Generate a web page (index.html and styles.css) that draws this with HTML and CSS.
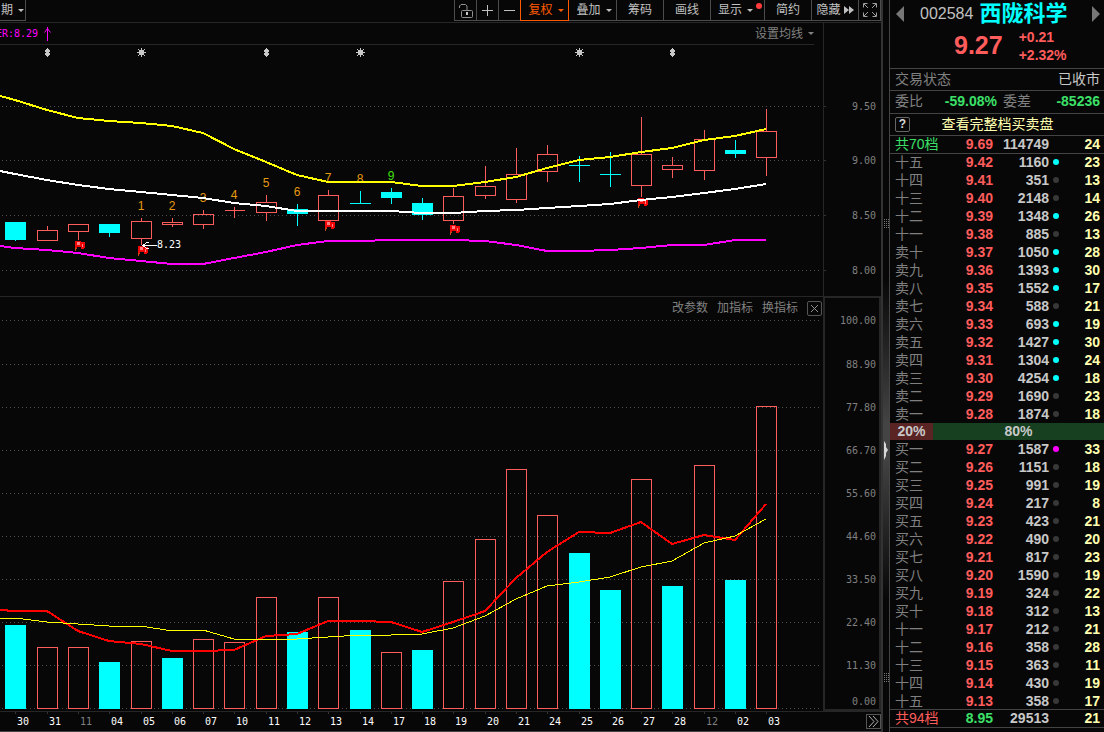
FILE: index.html
```html
<!DOCTYPE html>
<html lang="zh-CN">
<head>
  <meta charset="UTF-8">
  <title>西陇科学 002584</title>
  <meta name="viewport" content="width=device-width, initial-scale=1.0">
  <link rel="stylesheet" href="styles.css">
</head>
<body>
<div class="terminal">

  <!-- Charts -->
  <main class="charts">
    <div class="toolbar">
      <button class="tool period">期<i class="caret"></i></button>
      <div class="tools">
        <button class="tool icon" aria-label="锁定">
          <svg width="16" height="16" viewBox="0 0 16 16">
            <path d="M1.500 6V4L3 2.500h4.500L9 4v4" fill="none" stroke="#909090"/>
            <rect x="3.500" y="8.500" width="11" height="7" rx="1" fill="none" stroke="#909090"/>
            <path d="M9 10v3" stroke="#c8c8c8" stroke-width="2"/>
          </svg>
        </button>
        <button class="tool icon" aria-label="放大">
          <svg width="12" height="12" viewBox="0 0 12 12"><path d="M0 6.500h11M5.500 1v11" stroke="#c0c0c0"/></svg>
        </button>
        <button class="tool icon" aria-label="缩小">
          <svg width="12" height="12" viewBox="0 0 12 12"><path d="M0 6.500h11" stroke="#c0c0c0"/></svg>
        </button>
        <button class="tool wide on">复权<i class="caret"></i></button>
        <button class="tool wide">叠加<i class="caret"></i></button>
        <button class="tool">筹码</button>
        <button class="tool">画线</button>
        <button class="tool wider">显示<i class="caret"></i><i class="badge"></i></button>
        <button class="tool">简约</button>
        <button class="tool hide">隐藏<svg width="10" height="8" viewBox="0 0 10 8"><path d="M0 0l5 4-5 4zM5 0l5 4-5 4z" fill="#c0c0c0"/></svg></button>
        <button class="tool icon" aria-label="全屏">
          <svg width="14" height="14" viewBox="0 0 14 14"><path d="M.5 4.500v-4h4M9.500.5h4v4M13.500 9.500v4h-4M4.500 13.500h-4v-4M1 1l4 4M13 1L9 5M13 13L9 9M1 13l4-4" fill="none" stroke="#a0a0a0"/></svg>
        </button>
      </div>
    </div>

    <section class="pane">
      <div class="plot">
        <div class="ma-bar">
          <span class="er">ER:8.29</span>
          <svg width="8" height="14" viewBox="0 0 8 14"><path d="M3.500 0v14M.5 5.500l3-4 3 4" fill="none" stroke="#f0f"/></svg>
          <button class="plain ma-set">设置均线<i class="caret"></i></button>
        </div>
        <svg class="k-chart" id="kChart"></svg>
      </div>
      <svg class="axis" id="kAxis"></svg>
    </section>

    <section class="pane lower">
      <div class="plot">
        <div class="ind-bar">
          <button class="plain">改参数</button>
          <button class="plain">加指标</button>
          <button class="plain">换指标</button>
          <button class="close" aria-label="关闭">
            <svg width="9" height="9" viewBox="0 0 9 9"><path d="M1 1l7 7M8 1L1 8" stroke="#909090"/></svg>
          </button>
        </div>
        <svg class="v-chart" id="vChart"></svg>
      </div>
      <svg class="axis" id="vAxis"></svg>
    </section>

    <div class="date-bar">
      <svg class="dates" id="dates"></svg>
      <button class="more" aria-label="更多">
        <svg width="11" height="11" viewBox="0 0 11 11"><path d="M1 0l5 5.500L1 11M5 0l5 5.500L5 11" fill="none" stroke="#b0b0b0"/></svg>
      </button>
    </div>
  </main>

  <!-- Splitter -->
  <svg class="splitter">
    <path d="M1 441l2 3v3l2 3-2 3v3l-2 4z" fill="#d8d8d8"/>
    <path d="M1.500 219v9M3.500 219v9M5.500 219v9M1.500 673v9M3.500 673v9M5.500 673v9" stroke="#777" stroke-dasharray="1 1"/>
  </svg>

  <!-- Quote panel -->
  <aside class="quote">
    <div class="stock">
      <button class="plain" aria-label="上一只"><svg width="8" height="16" viewBox="0 0 8 16"><path d="M8 0v16L0 8z" fill="#777"/></svg></button>
      <span class="code">002584</span>
      <h1>西陇科学</h1>
      <button class="plain next" aria-label="下一只"><svg width="8" height="16" viewBox="0 0 8 16"><path d="M0 0v16l8-8z" fill="#777"/></svg></button>
    </div>
    <div class="price">
      <strong>9.27</strong>
      <div class="change">+0.21<br>+2.32%</div>
    </div>
    <div class="line status"><span>交易状态</span><span class="closed">已收市</span></div>
    <div class="line ratio">
      <span>委比</span><b>-59.08%</b><span>委差</span><b>-85236</b>
    </div>
    <div class="line full">
      <button class="help" aria-label="帮助">?</button>
      <button class="plain view">查看完整档买卖盘</button>
    </div>
    <table class="book" id="asks"></table>
    <div class="balance"><span class="buy">20%</span><span class="sell">80%</span></div>
    <table class="book bids" id="bids"></table>
  </aside>

</div>
<script src="script.js"></script>
</body>
</html>
```

FILE: styles.css
```css
* { box-sizing: border-box; }

body {
  margin: 0;
  background: #070707;
  color: #808080;
  font: 12px/18px "Liberation Sans", "Noto Sans CJK SC", sans-serif;
}

button {
  font: inherit;
  color: inherit;
  background: none;
  border: none;
  padding: 0;
  cursor: pointer;
}

svg { display: block; flex: none; }

.terminal { display: flex; min-height: 100vh; overflow: hidden; }

/* Charts */
.charts {
  flex: 1;
  min-width: 0;
  border-right: 2px solid #333;
}

/* Toolbar */
.toolbar {
  display: flex;
  justify-content: space-between;
  align-items: flex-start;
  height: 23px;
  border-bottom: 1px solid #262626;
}
.tools { display: flex; }
.tool {
  position: relative;
  display: flex;
  align-items: center;
  justify-content: center;
  width: 48px;
  height: 21px;
  margin-left: -1px;
  border: 1px solid #4c4c4c;
  border-top: none;
  color: #c0c0c0;
}
.tool.icon { width: 23px; }
.tool.wide { width: 49px; padding-left: 3px; }
.tool.wider { width: 55px; padding-right: 4px; }
.tool.hide { gap: 3px; }
.tool.on { color: #ff5a00; border-color: #ff5a00; z-index: 1; }
.tool.period {
  width: 26px;
  margin-left: 0;
  border-left: none;
}
.caret {
  margin-left: 5px;
  border: 3px solid transparent;
  border-top-color: currentColor;
  border-bottom: none;
}
.badge {
  position: absolute;
  top: 3px;
  right: 2px;
  width: 6px;
  height: 6px;
  border-radius: 3px;
  background: #ff3b3b;
}

/* Panes */
.pane { display: flex; border-bottom: 1px solid #262626; }
.plot { flex: 1; min-width: 0; }
.axis { width: 58px; border-left: 1px solid #262626; }
.lower .axis { border: 2px solid #262626; border-top-width: 1px; }
.ma-bar {
  display: flex;
  align-items: center;
  height: 22px;
  margin-right: 9px;
  border-bottom: 1px solid #262626;
}
.er {
  width: 44px;
  text-indent: -4px;
  font: 10px/18px "DejaVu Sans Mono", monospace;
  color: #f0f;
}
.plain { display: flex; align-items: center; }
.ma-set { margin-left: auto; }
.k-chart { width: 100%; height: 251px; }
.ind-bar {
  display: flex;
  justify-content: flex-end;
  align-items: center;
  gap: 9px;
  height: 22px;
  padding-right: 1px;
}
.close {
  display: flex;
  align-items: center;
  justify-content: center;
  width: 15px;
  height: 15px;
  border: 1px solid #555;
  border-radius: 2px;
}
.v-chart { width: 100%; height: 392px; }

/* Chart marks */
.k-chart, .v-chart, .axis, .dates { shape-rendering: crispEdges; }
.grid { stroke: #505050; stroke-dasharray: 1 3; stroke-dashoffset: -2; }
.tick { stroke: #333; }
.up { fill: none; stroke: #ff5c5c; }
.down { fill: #0ff; }
.down-wick { stroke: #0ff; }
.curve { fill: none; stroke-width: 2; }
.curve.thin { stroke-width: 1; }
.count { font-size: 12px; fill: #e69a10; text-anchor: middle; }
.count.last { fill: #3fe010; }
.num { font: 10px "DejaVu Sans Mono", monospace; fill: #808080; }
.axis .num { text-anchor: end; }
.num.white { fill: #fff; }
.dates .num { text-anchor: middle; }

/* Dates */
.date-bar {
  display: flex;
  align-items: center;
  height: 20px;
  border-bottom: 1px solid #444;
}
.dates { flex: 1; min-width: 0; height: 19px; }
.more {
  display: flex;
  align-items: center;
  justify-content: center;
  width: 15px;
  height: 15px;
  border: 1px solid #555;
}

/* Splitter */
.splitter {
  width: 6px;
  background: linear-gradient(#070707 38%, #444 58%, #444 62%, #070707 82%);
}

/* Quote panel */
.quote {
  width: 215px;
  border-left: 1px solid #444;
  font-size: 14px;
}
.stock {
  display: flex;
  align-items: center;
  height: 28px;
  padding: 0 4px 0 6px;
}
.code { margin: 0 6px 0 16px; font-size: 16px; color: #c0c0c0; }
h1 { margin: 0; font-size: 22px; font-weight: bold; line-height: 28px; color: #0ff; }
.next { margin-left: auto; }
.price {
  display: flex;
  gap: 16px;
  height: 40px;
  padding-left: 64px;
  color: #ff5c5c;
}
.price strong { font-size: 25px; font-weight: bold; line-height: 34px; }
.change { font-weight: bold; line-height: 18px; }
.line {
  height: 22px;
  padding: 0 4px 0 5px;
  border-top: 1px solid #444;
  line-height: 21px;
}
.status { display: flex; justify-content: space-between; }
.closed { color: #c8c8c8; }
.ratio {
  display: grid;
  grid-template-columns: 28px 74px 34px 1fr;
  height: 23px;
}
.ratio b { text-align: right; color: #3ce068; }
.ratio span:nth-child(3) { text-align: right; }
.full {
  display: grid;
  grid-template-columns: 1fr auto 1fr;
  align-items: center;
  height: 23px;
  padding-bottom: 1px;
  border-bottom: 1px solid #444;
}
.help {
  width: 15px;
  height: 15px;
  border: 1px solid #666;
  border-radius: 2px;
  font-size: 12px;
  font-weight: bold;
  line-height: 13px;
  color: #d8d8d8;
}
.view { color: #ffffb0; line-height: 20px; }

/* Order book */
.book { width: 100%; table-layout: fixed; border-collapse: collapse; }
.book td, .book th { padding: 0; height: 18px; line-height: 18px; text-align: right; }
.book th { width: 46px; padding-left: 5px; text-align: left; font-weight: normal; white-space: nowrap; }
.book td { font-weight: bold; color: #c8c8c8; }
.book .p { width: 57px; color: #ff5c5c; }
.book .v { width: 56px; }
.book .c { padding-right: 4px; color: #ffffb0; }
.book .d { width: 14px; }
.dot {
  display: block;
  width: 6px;
  height: 6px;
  margin: 0 auto;
  border-radius: 3px;
  background: #383838;
}
.dot.cyan { background: #0ff; }
.dot.pink { background: #f0f; }
.book .sum td, .book .sum th { height: 17px; line-height: 17px; }
#asks .sum { box-shadow: 0 1px #444; }
#asks .sum th { color: #3ce068; }
#bids .sum { box-shadow: 0 -1px #444, 0 1px #444; }
#bids .sum th { color: #ff5c5c; }
#bids .sum .p { color: #3ce068; }

.balance { display: flex; height: 17px; line-height: 17px; font-weight: bold; color: #c8c8c8; text-align: center; }
.buy { width: 20%; background: #5a2424; }
.sell { width: 80%; background: #164020; }
```

FILE: script.js
```javascript
// x centre of day i
const cx = i => Math.ceil(15 + 31.28 * i);
const K_TOP = 45, V_TOP = 319;

const days = ['30', '31', '11', '04', '05', '06', '07', '10', '11', '12', '13', '14', '17',
  '18', '19', '20', '21', '24', '25', '26', '27', '28', '12', '02', '03'];
const monthStart = [2, 22];

// [down, high, body top, body bottom, low]
const candles = [
  [1, 222, 222, 240, 241], [0, 226, 230, 240, 240], [0, 224, 224, 231, 240], [1, 224, 224, 233, 237],
  [0, 218, 221, 238, 245], [0, 218, 222, 224, 227], [0, 210, 214, 224, 229], [0, 207, 210, 210, 218],
  [0, 195, 202, 212, 221], [1, 204, 209, 214, 226], [0, 190, 195, 220, 220], [1, 191, 203, 204, 204],
  [1, 188, 192, 198, 204], [1, 198, 203, 215, 220], [0, 188, 196, 220, 224], [0, 166, 186, 195, 199],
  [0, 148, 174, 199, 203], [0, 145, 154, 171, 182], [1, 156, 165, 166, 182], [1, 152, 174, 175, 187],
  [0, 117, 154, 185, 197], [0, 157, 165, 169, 178], [0, 130, 139, 170, 180], [1, 140, 150, 154, 158],
  [0, 109, 131, 157, 176]
];
const barTops = [625, 647, 647, 662, 641, 658, 639, 642, 597, 632, 597, 630, 652, 650, 581, 539,
  469, 515, 553, 590, 479, 586, 465, 580, 406];
// days with a filled bar in the lower pane
const filled = [0, 3, 5, 9, 11, 13, 18, 19, 21, 23];

// first value is at x = 0, the rest are one per day
const upper = [96, 100, 110, 118, 121, 123, 126, 133, 149, 162, 175, 182, 182, 182, 186, 186, 182,
  177, 168, 160, 157, 152, 148, 140, 136, 129];
const middle = [171, 174, 180, 185, 189, 192, 195, 198, 203, 206, 211, 211, 211, 211, 213, 213, 211,
  210, 208, 206, 204, 200, 197, 193, 189, 184];
const lower = [246, 248, 250, 253, 258, 261, 264, 264, 258, 252, 245, 241, 241, 240, 240, 240, 241,
  245, 251, 251, 250, 248, 245, 245, 240, 240];
const fast = [610, 611, 611, 631, 641, 644, 651, 651, 650, 636, 634, 621, 621, 622, 632, 622, 611,
  578, 552, 532, 533, 522, 544, 535, 540, 504];
const slow = [618, 618, 622, 624, 626, 626, 631, 630, 639, 639, 639, 637, 635, 635, 634, 628, 616,
  599, 586, 582, 577, 567, 561, 543, 536, 519];

function curve(vals, top, color, cls) {
  const pts = vals.map((y, i) => (i ? cx(i - 1) : 0) + ',' + (y - top)).join(' ');
  return `<polyline class="curve ${cls || ''}" stroke="${color}" points="${pts}"/>`;
}

function gridLine(y) {
  return `<line class="grid" x1="0" x2="99.5%" y1="${y + 0.5}" y2="${y + 0.5}"/>`;
}

function body(down, x, top, bottom) {
  return down
    ? `<rect class="down" x="${x - 10}" y="${top}" width="21" height="${bottom - top}"/>`
    : `<path class="up" d="M${x - 9.5} ${top + 0.5}h20v${bottom - top}h-20z"/>`;
}

// Candle chart
let k = [106, 160, 215, 270].map(y => gridLine(y - K_TOP)).join('');
candles.forEach(([down, high, top, bottom, low], i) => {
  const x = cx(i), cls = down ? 'down-wick' : 'up';
  k += `<path class="${cls}" d="M${x + 0.5} ${high - K_TOP}V${top - K_TOP}M${x + 0.5} ${bottom - K_TOP}V${low - K_TOP}"/>`;
  k += body(down, x, top - K_TOP, bottom - K_TOP);
});
[210, 210, 202, 199, 187, 196, 182, 183, 180].forEach((y, i) => {
  k += `<text class="count ${i === 8 ? 'last' : ''}" x="${cx(i + 4)}" y="${y - K_TOP}">${i + 1}</text>`;
});
// flags
[[75, 241], [138, 246], [325, 221], [450, 225], [638, 198]].forEach(([x, y]) => {
  k += `<g transform="translate(${x} ${y - K_TOP})"><path d="M0 0h6v1h4v6H9v1H6V6H2v1H0z" fill="#f00808"/>
    <path d="M2 1h3v3H2zM7 3h1v3H7z" fill="#ff8080"/><path d="M0 7h2v1H1v2H0z" fill="#c84818"/></g>`;
});
k += curve(upper, K_TOP, '#ff0') + curve(middle, K_TOP, '#fff') + curve(lower, K_TOP, '#f0f');
k += `<path d="M143 200.500h14M149 197.500h-2l-4 3 4 3h2" fill="none" stroke="#fff"/>
  <text class="num white" x="157" y="203">8.23</text>`;
// event marks
[1, 8, 21].forEach(i => {
  k += `<path transform="translate(${cx(i) - 2} 3)" d="M2 0h1v1h1v1h1v2H4v1h1v2H4v1H3v1H2V8H1V7H0V5h1V4H0V2h1V1h1z" fill="#c8c8c8"/>`;
});
[4, 11, 18].forEach(i => {
  k += `<path transform="translate(${cx(i) - 4} 3)" d="M4 0h1v2h2v2h2v1H7v2H5v2H4V7H2V5H0V4h2V2h2zM1 1h1v1H1zM7 1h1v1H7zM1 7h1v1H1zM7 7h1v1H7z" fill="#c8c8c8"/>`;
});
document.getElementById('kChart').innerHTML = k;

// Indicator chart
const levels = ['100.00', '88.90', '77.80', '66.70', '55.60', '44.60', '33.50', '22.40', '11.30', '0.00'];
const levelY = [320, 364, 407, 450, 493, 536, 579, 622, 665, 708];
let v = levelY.map(y => gridLine(y - V_TOP)).join('');
barTops.forEach((top, i) => {
  const down = filled.includes(i);
  v += body(down, cx(i), top - V_TOP, (down ? 709 : 708) - V_TOP);
});
v += curve(fast, V_TOP, '#f00') + curve(slow, V_TOP, '#ff0', 'thin');
document.getElementById('vChart').innerHTML = v;

// Price and value axes
document.getElementById('kAxis').innerHTML = ['9.50', '9.00', '8.50', '8.00'].map((t, i) => {
  const y = [106, 160, 215, 270][i] - 23;
  return `<line class="tick" x1="0" x2="2" y1="${y + 0.5}" y2="${y + 0.5}"/><text class="num" x="52" y="${y + 4}">${t}</text>`;
}).join('');
document.getElementById('vAxis').innerHTML = levels.map((t, i) => {
  const y = (i === 9 ? 701 : levelY[i]) - 298;
  return `<text class="num" x="51" y="${y + 4}">${t}</text>`;
}).join('');

document.getElementById('dates').innerHTML = days.map((t, i) =>
  `<line class="tick" x1="${cx(i) + 0.5}" x2="${cx(i) + 0.5}" y1="0" y2="2"/>
  <text class="num ${monthStart.includes(i) ? '' : 'white'}" x="${cx(i) + 8}" y="13">${t}</text>`).join('');

// Order book: [label, price, volume, count, dot]
const asks = [
  ['十五', '9.42', 1160, 23, 'cyan'], ['十四', '9.41', 351, 13], ['十三', '9.40', 2148, 14],
  ['十二', '9.39', 1348, 26, 'cyan'], ['十一', '9.38', 885, 13], ['卖十', '9.37', 1050, 28, 'cyan'],
  ['卖九', '9.36', 1393, 30, 'cyan'], ['卖八', '9.35', 1552, 17, 'cyan'], ['卖七', '9.34', 588, 21],
  ['卖六', '9.33', 693, 19, 'cyan'], ['卖五', '9.32', 1427, 30, 'cyan'], ['卖四', '9.31', 1304, 24, 'cyan'],
  ['卖三', '9.30', 4254, 18, 'cyan'], ['卖二', '9.29', 1690, 23], ['卖一', '9.28', 1874, 18]
];
const bids = [
  ['买一', '9.27', 1587, 33, 'pink'], ['买二', '9.26', 1151, 18], ['买三', '9.25', 991, 19],
  ['买四', '9.24', 217, 8], ['买五', '9.23', 423, 21], ['买六', '9.22', 490, 20],
  ['买七', '9.21', 817, 23], ['买八', '9.20', 1590, 19], ['买九', '9.19', 324, 22],
  ['买十', '9.18', 312, 13], ['十一', '9.17', 212, 21], ['十二', '9.16', 358, 28],
  ['十三', '9.15', 363, 11], ['十四', '9.14', 430, 19], ['十五', '9.13', 358, 17]
];

function row([label, price, vol, count, dot], sum) {
  const mark = sum ? '' : `<i class="dot ${dot || ''}"></i>`;
  return `<tr class="${sum ? 'sum' : ''}"><th scope="row">${label}</th><td class="p">${price}</td>
    <td class="v">${vol}</td><td class="d">${mark}</td><td class="c">${count}</td></tr>`;
}

document.getElementById('asks').innerHTML =
  row(['共70档', '9.69', 114749, 24], true) + asks.map(r => row(r)).join('');
document.getElementById('bids').innerHTML =
  bids.map(r => row(r)).join('') + row(['共94档', '8.95', 29513, 21], true);
```
